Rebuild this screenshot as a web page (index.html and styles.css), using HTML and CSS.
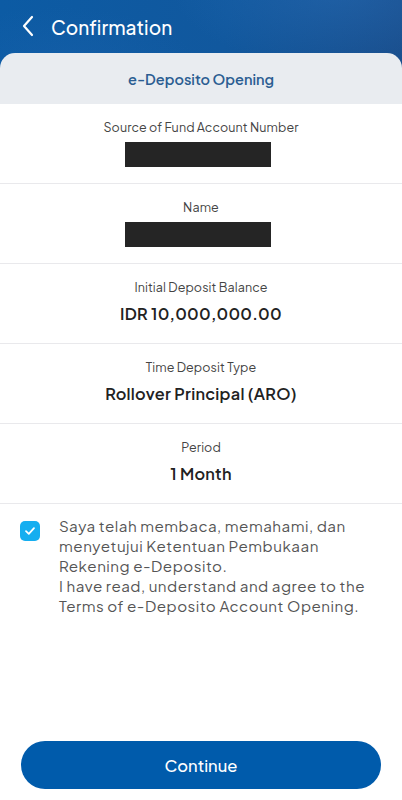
FILE: index.html
```html
<!DOCTYPE html>
<html>
<head>
    <title>Confirmation</title>
    <link rel="stylesheet" href="styles.css">
</head>
<body>
    <div class="page">
        <div class="top">
            <div class="appbar">
                <svg class="back" width="14" height="22" viewBox="0 0 14 22">
                    <path d="M11 2 L3 11 L11 20" fill="none" stroke="#fff" stroke-width="2.2" stroke-linecap="round" stroke-linejoin="round"/>
                </svg>
                <span class="appbar-title">Confirmation</span>
            </div>
            <div class="card-head">e-Deposito Opening</div>
        </div>

        <div class="row">
            <div class="label">Source of Fund Account Number</div>
            <div class="masked"></div>
        </div>
        <div class="row">
            <div class="label">Name</div>
            <div class="masked"></div>
        </div>
        <div class="row">
            <div class="label">Initial Deposit Balance</div>
            <div class="value">IDR 10,000,000.00</div>
        </div>
        <div class="row">
            <div class="label">Time Deposit Type</div>
            <div class="value">Rollover Principal (ARO)</div>
        </div>
        <div class="row">
            <div class="label">Period</div>
            <div class="value">1 Month</div>
        </div>

        <div class="agree">
            <span class="check">
                <svg width="12" height="10" viewBox="0 0 12 10">
                    <path d="M2 5.2 L4.8 7.8 L10 2.2" fill="none" stroke="#fff" stroke-width="1.8" stroke-linecap="round" stroke-linejoin="round"/>
                </svg>
            </span>
            <p class="agree-text">Saya telah membaca, memahami, dan menyetujui Ketentuan Pembukaan Rekening e-Deposito.<br>I have read, understand and agree to the Terms of e-Deposito Account Opening.</p>
        </div>

        <div class="footer">
            <button class="continue-btn">Continue</button>
        </div>
    </div>
</body>
</html>
```

FILE: styles.css
```css
body { margin: 0; font-family: "Plus Jakarta Sans", Inter, "Noto Sans", sans-serif; background: #fff; color: #333; }
.page { min-height: 800px; display: flex; flex-direction: column; }
.top { background: radial-gradient(ellipse 240px 110px at 340px -10px, rgba(45, 115, 190, 0.4), transparent 70%), radial-gradient(ellipse 200px 90px at 60px 70px, rgba(30, 100, 175, 0.35), transparent 70%), linear-gradient(100deg, #0c5ba4 0%, #11589e 55%, #1a4e8c 100%); }
.appbar { height: 53px; display: flex; align-items: center; padding-left: 21px; }
.back { margin-right: 16px; margin-top: -1px; }
.appbar-title { color: #fff; font-size: 19px; font-weight: 500; letter-spacing: 0.1px; }
.card-head { height: 51px; background: #e9ecf0; border-radius: 15px 15px 0 0; display: flex; align-items: center; justify-content: center; color: #2b5d92; font-size: 14.5px; font-weight: 600; }
.row { height: 80px; box-sizing: border-box; border-bottom: 1px solid #e9e9ec; display: flex; flex-direction: column; align-items: center; padding-top: 14px; }
.label { font-size: 12.5px; line-height: 18px; color: #444; letter-spacing: 0.1px; }
.masked { width: 146px; height: 25px; background: #252525; margin-top: 6px; margin-right: 6px; }
.value { font-size: 16.3px; font-weight: 600; line-height: 22px; color: #222; margin-top: 7px; letter-spacing: 0.25px; }
.agree { display: flex; padding: 12px 28px 0 20px; }
.check { flex: none; width: 20px; height: 20px; border-radius: 5px; background: #15aef0; display: flex; align-items: center; justify-content: center; margin-top: 5px; margin-right: 19px; }
.agree-text { margin: 0; font-size: 15.2px; line-height: 20px; color: #555; letter-spacing: 0.5px; }
.footer { margin-top: auto; padding: 0 21px 11px 21px; }
.continue-btn { width: 100%; height: 48px; border: none; border-radius: 24px; background: #005bab; color: #fff; font-family: inherit; font-size: 16.5px; font-weight: 500; cursor: pointer; }
```
